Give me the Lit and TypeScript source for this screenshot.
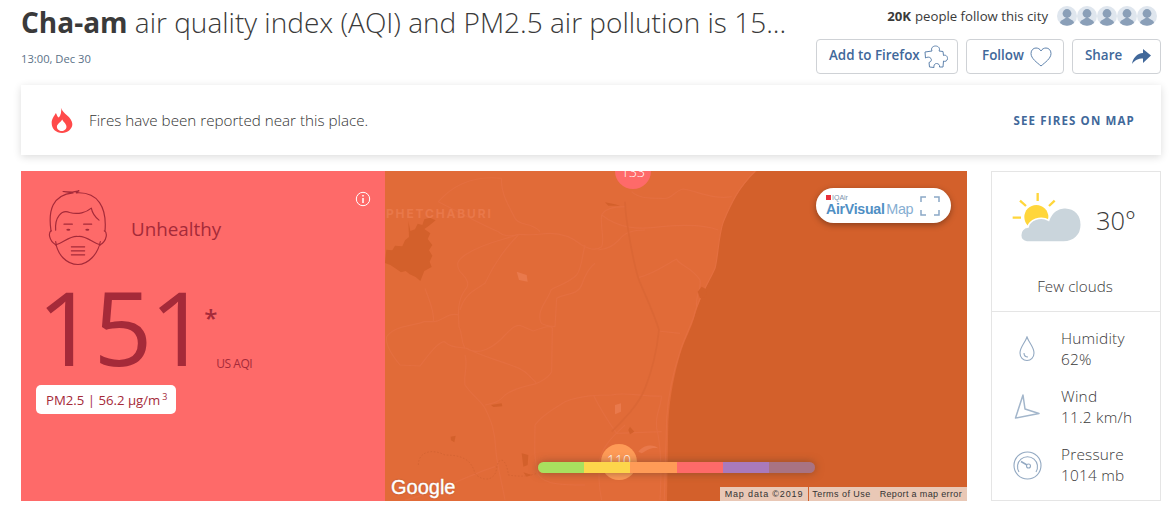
import { LitElement, html, css, svg } from "lit";
import { customElement } from "lit/decorators.js";

const roads = [
  "M1110 18C1060 70 1040 110 1015 170C1000 215 1000 270 990 310C975 345 950 380 930 440C925 470 900 510 885 560C865 620 850 680 845 760L838 1005",
  "M720 780C700 800 660 830 645 880C640 920 640 960 650 1005",
  "M740 80C760 100 790 100 830 100C860 105 870 75 895 72C940 80 990 105 1040 95",
  "M720 125C690 125 660 130 650 150C645 190 660 220 650 245C630 260 610 250 590 240C560 215 520 200 470 207C440 212 420 208 400 208C360 225 300 230 240 270C220 285 210 295 225 320C250 345 255 360 240 375C215 410 220 450 222 485C235 510 225 525 240 550",
  "M650 150C700 190 760 195 830 185C880 180 950 175 1000 195",
  "M640 255C680 250 690 235 705 222C720 200 750 195 780 195",
  "M760 338C810 325 840 300 875 282C880 300 920 305 945 345C950 375 930 390 935 425",
  "M600 240C590 280 590 310 575 330C550 355 510 365 498 375C490 400 470 420 465 445C462 480 470 480 510 485L515 400C540 385 580 390 590 360C600 330 610 310 630 295",
  "M400 210C360 250 330 290 300 355C270 375 240 385 225 435",
  "M222 450C190 440 170 470 145 470L118 470C80 485 30 480 5 515C0 540 20 570 45 600L105 603C130 570 160 530 178 530C200 550 220 545 245 550C280 575 330 545 360 510C380 490 395 475 410 483L445 498C480 485 500 480 502 490L500 620C490 640 465 650 455 655C430 630 420 615 390 605C340 585 290 575 245 550",
  "M240 570C250 600 235 630 240 660C260 690 290 710 300 730C320 770 330 800 332 850C335 900 350 950 360 1005",
  "M455 655C420 665 385 670 360 690C340 715 320 715 300 720",
  "M450 780C450 840 445 880 460 930C480 960 540 960 600 960",
  "M450 780C470 750 510 730 540 710C590 690 640 690 680 690C720 680 770 695 830 693",
  "M625 690C650 740 670 770 695 805L830 800",
  "M830 693C825 740 810 745 815 790C830 850 830 920 825 1005",
  "M350 40C345 80 370 120 390 160C405 185 440 170 465 200",
  "M160 110C200 65 260 30 350 40",
  "M160 110C200 130 290 180 340 200C355 215 385 215 400 208",
  "M120 370C130 400 150 440 145 470",
  "M330 905C250 930 140 990 60 1005",
  "M820 498L885 505",
];
const dotted = "M100 900C100 860 140 850 180 870C240 870 260 890 270 925C290 950 330 950 335 910C340 870 365 880 370 930C400 935 430 935 455 925";
const ponds = [
  "M70 168L76 198L90 193L98 176L112 180L118 163L135 158L152 166L132 182L118 192L136 205L128 222L142 240L132 256L142 272L134 290L140 306L118 318L106 348L92 336L74 328L62 318L48 322L34 312L16 300L0 294L4 254L22 256L30 242L52 244L60 226L72 216Z",
  "M950 365L968 375L960 395L945 400L938 380Z",
  "M410 865L430 870L428 900L415 905Z",
  "M735 785L748 800L735 808L730 795Z",
  "M318 720L350 715L352 724L325 726Z",
  "M197 815L212 812L208 832L198 826Z",
  "M660 112L690 118L705 122L670 122Z",
  "M415 922L440 930L425 935Z",
];
const lightPonds = [
  "M395 320L425 330L428 350L402 345Z",
  "M690 720L708 715L708 740L690 748Z",
  "M760 860C780 835 810 840 820 850C800 845 785 855 770 865Z",
];

const avatar = svg`<svg class="avatar" viewBox="0 0 20 20"><circle cx="10" cy="10" r="10" fill="#dfe6ee"/><circle cx="10" cy="7.5" r="4.4" fill="#8a9fb8"/><path d="M10 11C8 13 3 14 3 17A10 10 0 0 0 17 17C17 14 12 13 10 11Z" fill="#8a9fb8"/></svg>`;

@customElement("app-root")
export class AppRoot extends LitElement {
  static styles = css`
    :host {
      display: block;
      width: 1173px;
      height: 521px;
      overflow: hidden;
      box-sizing: border-box;
      padding: 0 12px 0 21px;
      background: #fff;
      color: #3a3a3a;
      font-family: "Open Sans", "Noto Sans", sans-serif;
      font-weight: 300;
    }
    .top {
      display: flex;
      justify-content: space-between;
      height: 85px;
    }
    .heading {
      width: 776px;
      padding-top: 3px;
    }
    h1 {
      margin: 0;
      font-size: 28px;
      line-height: 39px;
      font-weight: 300;
      white-space: nowrap;
    }
    h1 b {
      font-weight: 700;
    }
    .time {
      margin-top: 8px;
      font-size: 11.2px;
      line-height: 17px;
      font-weight: 400;
      color: #5a7187;
    }
    .actions {
      display: flex;
      flex-direction: column;
      align-items: flex-end;
    }
    .followers {
      display: flex;
      align-items: center;
      height: 20px;
      margin-top: 6px;
      padding-right: 4px;
      font-size: 13.2px;
      font-weight: 400;
    }
    .followers b {
      font-weight: 700;
      margin-right: 4px;
    }
    .avatars {
      display: flex;
      margin-left: 9px;
    }
    .avatar {
      width: 20px;
      height: 20px;
      display: block;
    }
    .buttons {
      display: flex;
      gap: 8px;
      margin-top: 13px;
    }
    .btn {
      box-sizing: border-box;
      height: 35px;
      display: flex;
      align-items: center;
      justify-content: space-between;
      padding: 0 9px 3px 12px;
      border: 1px solid #cfd2d6;
      border-radius: 4px;
      color: #41689a;
      font-size: 13.4px;
      font-weight: 600;
    }
    .btn svg {
      margin-top: 3px;
    }
    .banner {
      box-sizing: border-box;
      height: 70px;
      display: flex;
      align-items: center;
      padding: 0 26px 0 30px;
      box-shadow: 0 2px 8px rgba(0, 0, 0, 0.14);
      font-size: 15.2px;
      font-weight: 400;
    }
    .banner span {
      flex: 1;
      margin-left: 15px;
      font-weight: 300;
      color: #333;
    }
    .banner a {
      color: #41689a;
      font-size: 11.5px;
      font-weight: 700;
      letter-spacing: 1.15px;
    }
    .main {
      display: flex;
      justify-content: space-between;
      margin-top: 16px;
      height: 330px;
    }
    .aqi {
      display: flex;
      width: 946px;
    }
    .status {
      position: relative;
      box-sizing: border-box;
      width: 364px;
      padding: 18px 0 0 15px;
      background: #fe6a69;
      color: #a52a39;
    }
    .face-row {
      display: flex;
      align-items: center;
      padding-left: 12px;
      gap: 23px;
    }
    .label {
      font-size: 18.8px;
      font-weight: 500;
      margin-top: 3px;
    }
    .info {
      position: absolute;
      top: 20px;
      right: 14px;
      width: 16px;
      height: 16px;
    }
    .value {
      display: flex;
      height: 119px;
      padding-left: 1px;
    }
    .num {
      margin-top: 2px;
      font-size: 103px;
      line-height: 117px;
      font-weight: 400;
      letter-spacing: -2.5px;
    }
    .star {
      font-size: 24px;
      line-height: 30px;
      margin: 37px 0 0 -2px;
      font-weight: 600;
    }
    .unit {
      font-size: 12px;
      line-height: 16px;
      margin: 90px 0 0 -1px;
      letter-spacing: -0.5px;
      font-weight: 400;
    }
    .pill {
      display: inline-flex;
      align-items: center;
      box-sizing: border-box;
      height: 29px;
      width: 140px;
      padding-left: 10px;
      background: #fff;
      border-radius: 5px;
      font-size: 13.2px;
      font-weight: 400;
      white-space: nowrap;
    }
    .pill sup {
      font-size: 9px;
      line-height: 10px;
      margin: -6px 0 0 2px;
    }
    .map {
      position: relative;
      flex: 1;
      overflow: hidden;
      background: #e16b38;
    }
    .map > svg {
      display: block;
      width: 582px;
      height: 330px;
    }
    .brand {
      position: absolute;
      top: 17px;
      right: 16px;
      box-sizing: border-box;
      width: 135px;
      height: 35px;
      padding: 5px 0 0 10px;
      background: #fff;
      border-radius: 18px;
      box-shadow: 0 2px 6px rgba(0, 0, 0, 0.35);
      color: #4f8fc4;
      font-family: "Liberation Sans", sans-serif;
    }
    .iq {
      display: flex;
      align-items: center;
      gap: 1px;
      font-size: 7px;
      line-height: 9px;
      color: #7b93ad;
    }
    .iq i {
      width: 5px;
      height: 5px;
      background: #e8303a;
      display: block;
    }
    .av {
      font-size: 14.2px;
      line-height: 15px;
      font-weight: 700;
      letter-spacing: -0.3px;
    }
    .av span {
      font-weight: 400;
      font-size: 14.4px;
      margin-left: -2px;
      color: #86aed2;
    }
    .corners {
      position: absolute;
      top: 8px;
      right: 11px;
      width: 20px;
      height: 20px;
    }
    .scale {
      position: absolute;
      left: 153px;
      top: 291px;
      display: flex;
      border-radius: 6px;
      overflow: hidden;
      box-shadow: 0 0 8px rgba(90, 60, 40, 0.55);
    }
    .scale i {
      display: block;
      width: 46.2px;
      height: 11px;
    }
    .google {
      position: absolute;
      left: 6px;
      bottom: 2px;
      color: #fff;
      font-family: "Liberation Sans", sans-serif;
      font-size: 20px;
      line-height: 24px;
      font-weight: 400;
      text-shadow: 0 0 2px rgba(0, 0, 0, 0.3);
      -webkit-text-stroke: 0.4px #fff;
    }
    .attrib {
      position: absolute;
      right: 0;
      bottom: 0;
      display: flex;
      gap: 1px;
      height: 14px;
      color: #333;
      font-family: "Liberation Sans", sans-serif;
      font-size: 9px;
      line-height: 15px;
      letter-spacing: 0.45px;
      font-weight: 400;
    }
    .attrib span {
      padding: 0 5px;
      background: #e9c8b6;
      white-space: nowrap;
    }
    .attrib span:first-child {
      letter-spacing: 0.85px;
    }
    .attrib span + span {
      padding-left: 3px;
    }
    .attrib em {
      font-style: normal;
      margin-left: 9px;
      letter-spacing: 0.35px;
    }
    .weather {
      box-sizing: border-box;
      width: 170px;
      border: 1px solid #e5e5e5;
    }
    .now {
      box-sizing: border-box;
      height: 140px;
      border-bottom: 1px solid #e5e5e5;
    }
    .sky {
      display: flex;
      align-items: center;
      padding: 20px 0 0 20px;
      gap: 14px;
      height: 51px;
    }
    .sky svg {
      width: 70px;
      height: 51px;
    }
    .temp {
      font-size: 25.5px;
      font-weight: 300;
      margin-top: 5px;
    }
    .desc {
      margin-top: 33px;
      padding-right: 2px;
      text-align: center;
      font-size: 15.2px;
      line-height: 20px;
    }
    .stats {
      display: flex;
      flex-direction: column;
      gap: 16px;
      padding: 16px 0 0 22px;
    }
    .stat {
      display: flex;
      align-items: center;
      height: 42px;
      font-size: 15.4px;
      letter-spacing: 0.2px;
      line-height: 21px;
    }
    .ico {
      width: 47px;
      flex: none;
    }
    .ico svg {
      display: block;
    }
  `;

  render() {
    return html`
      <div class="top">
        <div class="heading">
          <h1><b>Cha-am</b> air quality index (AQI) and PM2.5 air pollution is 15...</h1>
          <div class="time">13:00, Dec 30</div>
        </div>
        <div class="actions">
          <div class="followers">
            <b>20K</b> people follow this city
            <div class="avatars">${avatar}${avatar}${avatar}${avatar}${avatar}</div>
          </div>
          <div class="buttons">
            <div class="btn" style="width:142px">
              Add to Firefox
              <svg width="24" height="24" viewBox="0 0 24 24" fill="none" stroke="#5f83ad" stroke-width="1">
                <path d="M8 6C6.500 3 9 1 11.500 1C14.500 1 16.500 3.500 15 6L19 6.500L19.500 10.500C21.500 9.500 23.500 11 23.500 13.500C23.500 16 21 17 19.500 16L19 22L15.500 22C16 20 14.500 18.500 12.500 18.500C10.500 18.500 9.500 20.500 10 22.500L5.500 22L5 17.500C7 17 8 15 7 13.500C5.500 11.500 3 12 1.500 13L1 7Z"/>
              </svg>
            </div>
            <div class="btn" style="width:98px;padding-left:15px;padding-right:11px">
              Follow
              <svg width="22" height="20" viewBox="0 0 22 20" fill="none" stroke="#5f83ad" stroke-width="1">
                <path d="M11 19C7 15.500 1 11.500 1 6.500C1 3 3.500 1 6 1C8 1 10 2 11 4C12 2 14 1 16 1C18.500 1 21 3 21 6.500C21 11.500 15 15.500 11 19Z"/>
              </svg>
            </div>
            <div class="btn" style="width:89px">
              Share
              <svg width="19" height="15" viewBox="0 0 19 15"><path d="M11 0L19 6.500L11 14V9.500C6 9.500 3 11 0 15C1 9 5 4.500 11 4Z" fill="#41689a"/></svg>
            </div>
          </div>
        </div>
      </div>

      <div class="banner">
        <svg width="23" height="27" viewBox="150 320 70 82">
          <path d="M180 322C185 340 215 350 215 372C215 388 200 399 184 399C165 399 152 387 152 368C152 355 160 347 165 338C168 345 170 350 174 352C180 345 183 332 180 322Z" fill="#ff4a4a"/>
          <path d="M184 358C190 368 197 372 197 380C197 388 190 393 183 393C175 393 168 388 168 380C168 372 178 368 184 358Z" fill="#fff"/>
        </svg>
        <span>Fires have been reported near this place.</span>
        <a>SEE FIRES ON MAP</a>
      </div>

      <div class="main">
        <div class="aqi">
          <div class="status">
            <div class="face-row">
              <svg width="60" height="77" viewBox="85 55 180 230" fill="none" stroke="#a52a39" stroke-width="3.500" stroke-linecap="round" stroke-linejoin="round">
                <path d="M94 180C85 120 98 72 160 66L130 62L158 64L178 60L170 66C235 62 262 110 256 180"/>
                <path d="M108 212C112 250 140 281 175 281C205 281 235 250 242 212"/>
                <path d="M108 178C105 140 125 115 150 125C175 132 200 125 215 112C218 128 228 140 238 148"/>
                <path d="M133 160H158M192 160H216"/>
                <ellipse cx="146" cy="177" rx="6" ry="3" fill="#a52a39" stroke="none"/>
                <ellipse cx="203" cy="177" rx="6" ry="3" fill="#a52a39" stroke="none"/>
                <path d="M108 222C130 218 150 193 175 197C200 193 220 218 242 222"/>
                <path d="M95 180C85 185 88 210 108 222M254 180C264 185 262 210 242 222"/>
                <path d="M155 228H195M155 240H195M155 252H195"/>
              </svg>
              <div class="label">Unhealthy</div>
            </div>
            <svg class="info" viewBox="0 0 16 16" fill="none" stroke="#fff" stroke-width="1">
              <circle cx="8" cy="8" r="6.700"/>
              <path d="M8 7V12M8 4V5.500" stroke-width="1.500"/>
            </svg>
            <div class="value">
              <div class="num">151</div>
              <div class="star">*</div>
              <div class="unit">US AQI</div>
            </div>
            <div class="pill">PM2.5 | 56.2 µg/m<sup>3</sup></div>
          </div>

          <div class="map">
            <svg viewBox="0 18 1746 990">
              <rect x="0" y="18" width="1746" height="990" fill="#e16b38"/>
              <path d="M1115 18C1060 70 1040 110 1012 180C1000 220 1000 270 990 310C975 345 950 385 930 450C920 490 900 520 885 570C870 620 855 690 850 770L846 1008H1746V18Z" fill="#d3602b"/>
              <g fill="none" stroke="#e46f40" stroke-width="3.500" stroke-linejoin="round">
                ${roads.map((d) => svg`<path d=${d}/>`)}
              </g>
              <path d="M720 110C722 170 745 290 760 340C780 390 805 440 822 495C815 560 800 620 780 670C760 720 720 760 680 800" fill="none" stroke="#db6735" stroke-width="5"/>
              <path d=${dotted} fill="none" stroke="#cf6030" stroke-width="2" stroke-dasharray="5 5"/>
              <g fill="#d3602b">${ponds.map((d) => svg`<path d=${d}/>`)}</g>
              <g fill="#e9794c">${lightPonds.map((d) => svg`<path d=${d}/>`)}</g>
              <text x="3" y="158" fill="#e9784a" font-family="Inter, sans-serif" font-size="36" font-weight="700" letter-spacing="5.500">PHETCHABURI</text>
              <circle cx="744" cy="18" r="54" fill="#fe6a69"/>
              <text x="744" y="36" fill="#fff" font-size="42" text-anchor="middle" font-family="Open Sans, sans-serif" font-weight="300">133</text>
              <circle cx="702" cy="891" r="54" fill="#fe9b57"/>
              <text x="702" y="902" fill="#fff" font-size="42" text-anchor="middle" font-family="Open Sans, sans-serif" font-weight="300">110</text>
            </svg>
            <div class="brand">
              <div class="iq"><i></i>IQAir</div>
              <div class="av">AirVisual <span>Map</span></div>
              <svg class="corners" viewBox="0 0 20 20" fill="none" stroke="#8ba8c6" stroke-width="1.500">
                <path d="M1 6V1H6M14 1H19V6M19 14V19H14M6 19H1V14"/>
              </svg>
            </div>
            <div class="scale">
              ${["#a8e05f", "#fdd64b", "#ff9b57", "#fe6a69", "#a97abc", "#a87383"].map(
                (c) => html`<i style="background:${c}"></i>`
              )}
            </div>
            <div class="google">Google</div>
            <div class="attrib">
              <span>Map data ©2019</span>
              <span>Terms of Use<em>Report a map error</em></span>
            </div>
          </div>
        </div>

        <div class="weather">
          <div class="now">
            <div class="sky">
              <svg viewBox="80 65 210 153">
                <g stroke="#ffd63b" stroke-width="7" stroke-linecap="butt">
                  <path d="M157 68V92M104 91L122 107M208 91L191 107M82 142H107"/>
                </g>
                <circle cx="153" cy="140" r="36" fill="#ffd63b"/>
                <path d="M125 215C100 215 98 175 128 170C132 150 165 135 190 150C198 125 220 110 240 112C270 113 288 135 288 163C288 195 265 215 235 215Z" fill="#cad5dc" stroke="#fff" stroke-width="5"/>
              </svg>
              <div class="temp">30°</div>
            </div>
            <div class="desc">Few clouds</div>
          </div>
          <div class="stats">
            <div class="stat">
              <div class="ico">
                <svg width="26" height="26" viewBox="0 0 26 26" fill="none" stroke="#93a9c2" stroke-width="1.100">
                  <path d="M13 1C11 7 6 11 6 17C6 21.500 9 24.500 13 24.500C17 24.500 20 21.500 20 17C20 11 15 7 13 1Z"/>
                  <path d="M10 17C10 19.500 11.500 21 14 21"/>
                </svg>
              </div>
              <div>Humidity<br />62%</div>
            </div>
            <div class="stat">
              <div class="ico">
                <svg width="26" height="26" viewBox="0 0 26 26" fill="none" stroke="#a3b6cb" stroke-width="1.500" stroke-linejoin="round">
                  <path d="M9 1L1.500 24L25 19.500L11 15Z"/>
                </svg>
              </div>
              <div>Wind<br />11.2 km/h</div>
            </div>
            <div class="stat">
              <div class="ico">
                <svg width="29" height="29" viewBox="0 0 29 29" fill="none" stroke="#93a9c2" stroke-width="1.100" style="margin-left:-1px">
                  <circle cx="14.500" cy="14.500" r="13.500"/>
                  <path d="M6 21A10 10 0 1 1 23 21"/>
                  <path d="M8 10.500L14 14" stroke-width="1.500"/>
                  <circle cx="15.500" cy="15" r="2"/>
                </svg>
              </div>
              <div>Pressure<br />1014 mb</div>
            </div>
          </div>
        </div>
      </div>
    `;
  }
}
